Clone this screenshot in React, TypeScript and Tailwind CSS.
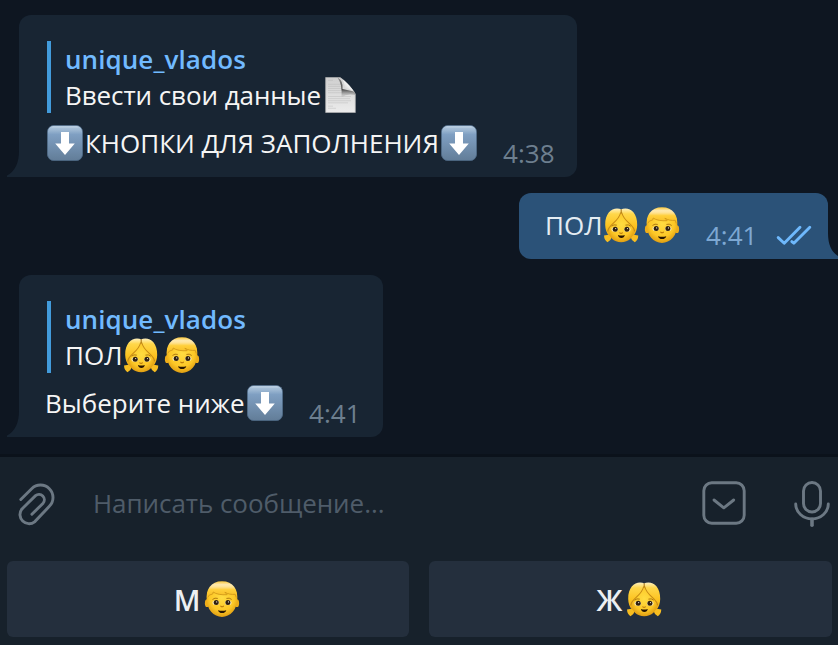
import type { ReactNode } from "react";

function Defs() {
  return (
    <svg width="0" height="0" className="absolute" aria-hidden="true">
      <defs>
        <linearGradient id="hair" x1="0" y1="0" x2="0" y2="1">
          <stop offset="0" stopColor="#fff0bd" />
          <stop offset="0.2" stopColor="#ffd749" />
          <stop offset="0.65" stopColor="#fcc21f" />
          <stop offset="1" stopColor="#eba914" />
        </linearGradient>
        <linearGradient id="boyHair" x1="0" y1="0" x2="0" y2="1">
          <stop offset="0" stopColor="#fbc93e" />
          <stop offset="0.18" stopColor="#ffeab0" />
          <stop offset="0.3" stopColor="#ffe291" />
          <stop offset="0.45" stopColor="#ffcf3a" />
          <stop offset="1" stopColor="#f3b418" />
        </linearGradient>
        <radialGradient id="skin" cx="0.5" cy="0.4" r="0.62">
          <stop offset="0" stopColor="#ffdc42" />
          <stop offset="0.65" stopColor="#fdc827" />
          <stop offset="1" stopColor="#dd9a10" />
        </radialGradient>
        <linearGradient id="tile" x1="0" y1="0" x2="0" y2="1">
          <stop offset="0" stopColor="#b4c9de" />
          <stop offset="0.12" stopColor="#a0bad4" />
          <stop offset="0.26" stopColor="#7f9fc2" />
          <stop offset="1" stopColor="#627d98" />
        </linearGradient>
        <linearGradient id="paper" x1="0" y1="0" x2="0" y2="1">
          <stop offset="0" stopColor="#cfcfcf" />
          <stop offset="1" stopColor="#ececec" />
        </linearGradient>
        <linearGradient id="curl" x1="0" y1="1" x2="1" y2="0">
          <stop offset="0" stopColor="#a8a8a8" />
          <stop offset="0.5" stopColor="#efefef" />
          <stop offset="1" stopColor="#ffffff" />
        </linearGradient>
        <linearGradient id="curlShade" x1="0" y1="0" x2="0" y2="1">
          <stop offset="0" stopColor="#8a8a8a" />
          <stop offset="0.6" stopColor="#4c4c4c" />
          <stop offset="1" stopColor="#bdbdbd" stopOpacity="0.2" />
        </linearGradient>
      </defs>
    </svg>
  );
}

function Emoji({ children }: { children: ReactNode }) {
  return (
    <span className="flex h-9 w-[41px] shrink-0 justify-center">
      <svg width="36" height="36" viewBox="0 0 36 36">{children}</svg>
    </span>
  );
}

function Features({ y = 0 }: { y?: number }) {
  return (
    <g transform={`translate(0 ${y})`}>
      <path d="M8.8 18.8Q10.8 17 13.4 17.9M22.8 17.9Q25.4 17 27.4 18.8" fill="none" stroke="#b07a10" strokeWidth="1" strokeLinecap="round" />
      <ellipse cx="11.8" cy="22.4" rx="3.3" ry="2.3" fill="#ffefb8" />
      <ellipse cx="24.2" cy="22.4" rx="3.3" ry="2.3" fill="#ffefb8" />
      <circle cx="12.2" cy="22.2" r="2.5" fill="#30200e" />
      <circle cx="23.9" cy="22.2" r="2.5" fill="#30200e" />
      <circle cx="12.7" cy="21.5" r="0.55" fill="#fff" />
      <circle cx="24.4" cy="21.5" r="0.55" fill="#fff" />
      <path d="M16.8 25.8Q18.1 26.8 19.4 25.8" fill="none" stroke="#bd7d0e" strokeWidth="1.1" strokeLinecap="round" />
    </g>
  );
}

function Girl() {
  return (
    <Emoji>
      <path d="M7 27.5L1 28.6Q1.2 33.4 4.5 35.2Q8 33.4 9 29.5ZM29.4 27.5L35.3 28.6Q35.1 33.4 31.8 35.2Q28.3 33.4 27.3 29.5Z" fill="#f7bd20" />
      <path d="M2.2 18C2 7 8 1.6 14 1.6Q16.8 1.6 18.2 2.5Q19.6 1.6 22.4 1.6C28.5 1.6 34.4 7 34.2 18Q34 25 30.5 28.5H6Q2.4 25 2.2 18Z" fill="url(#hair)" />
      <path d="M5.2 22.5C6.5 17 15.8 15 18.2 6C20.6 15 29.9 17 31.2 22.5C31.2 30 25.5 35.2 18.2 35.2C11 35.2 5.2 30 5.2 22.5Z" fill="url(#skin)" />
      <path d="M4.8 24.5C5 17.5 15.4 15.5 17.7 5.5M31.6 24.5C31.4 17.5 21 15.5 18.7 5.5" fill="none" stroke="#c88c14" strokeWidth="1.1" />
      <path d="M18.2 2.4V6.5" fill="none" stroke="#a86f0c" strokeWidth="1" />
      <Features y={0.1} />
      <path d="M14.9 28Q18.4 29 21.8 28Q21.2 31 18.4 31Q15.5 31 14.9 28Z" fill="#271500" />
    </Emoji>
  );
}

function Boy() {
  return (
    <Emoji>
      <ellipse cx="3.1" cy="22.2" rx="2.2" ry="3.9" fill="#eead19" />
      <ellipse cx="32.9" cy="22.2" rx="2.2" ry="3.9" fill="#eead19" />
      <path d="M2.9 16C3 8 8 4 18 4S33 8 33.1 16C33.9 29 26 35.9 18 35.9S2.1 29 2.9 16Z" fill="url(#skin)" />
      <path d="M2.8 19C1.6 8.5 6.8 0.3 18 0.3S34.4 8.5 33.2 19L31.6 13.6C28 14.2 24 13.2 21.4 11.6C21.8 12.8 22.8 13.4 23.7 13.6C17 14.3 11.5 12.8 9.2 11L8.8 13L5.1 14.3Q4.2 16.5 2.8 19Z" fill="url(#boyHair)" />
      <path d="M3.8 16.3L5.3 14.1L8.8 12.9L9.2 11C12 13.2 17.5 14.1 23.2 13.7L20.9 11.2C23.7 13 27.5 13.8 31.2 13.3L32.3 16.4" fill="none" stroke="#d39a18" strokeWidth="0.9" />
      <Features y={-0.6} />
      <path d="M14 29.2Q18.1 30.5 22.3 29.2Q21.5 32 18.1 32Q14.8 32 14 29.2Z" fill="#271500" />
    </Emoji>
  );
}

function DownArrow() {
  return (
    <Emoji>
      <rect x="0.4" y="0.4" width="35.2" height="35.2" rx="6.5" fill="url(#tile)" stroke="#4f6b88" strokeWidth="0.8" />
      <path d="M5 2H31" stroke="#d6e3ef" strokeWidth="1.2" strokeOpacity="0.5" strokeLinecap="round" />
      <path d="M14 7H22V18.5H27.8L18 30L8.2 18.5H14Z" fill="#fff" />
    </Emoji>
  );
}

function Page() {
  return (
    <Emoji>
      <path d="M2.7 0.4H17Q26 6.5 32.3 17V35.6H2.7Z" fill="url(#paper)" stroke="#b7b7b7" strokeWidth="0.7" />
      <path d="M5 3.3H10M5 7.3H17.5M5 9.4H18.5M5 11.5H19M5 13.6H19M5 15.7H20M5 19.5H28M5 21.6H27M5 23.7H28M5 25.8H25M5 29.2H10M5 31.3H13" stroke="#aeaeae" strokeWidth="0.6" strokeOpacity="0.6" />
      <path d="M14.5 0.5Q20.5 4 19.5 12L32 14.8V18Q24 16 18.5 20.5Q19.5 7 14.5 0.5Z" fill="url(#curlShade)" />
      <path d="M17 0.4Q22 4 21.5 11.6Q28 11 32.3 16.5Q26.5 7 17 0.4Z" fill="url(#curl)" />
    </Emoji>
  );
}

function Reply({ children }: { children: ReactNode }) {
  return (
    <div className="ml-[3px] h-[72px] border-l-4 border-[#429bdb] pl-[14px]">
      <div className="font-semibold tracking-[0.07px] text-[#71baff]">unique_vlados</div>
      <div className="flex">{children}</div>
    </div>
  );
}

function Incoming({ width, quote, time, children }: { width: string; quote: ReactNode; time: string; children: ReactNode }) {
  return (
    <div className={`relative ml-[19px] h-[162px] rounded-xl rounded-bl-none bg-[#182533] pt-[26px] pl-[25px] ${width}`}>
      <svg className="absolute bottom-0 -left-3" width="12" height="26" viewBox="0 0 12 26">
        <path d="M12 0V26H0V24.6Q12 18 12 0Z" fill="#182533" />
      </svg>
      <Reply>{quote}</Reply>
      <div className="mt-3 flex h-9">{children}</div>
      <time className="absolute right-[22.5px] bottom-[6px] text-[#6d7f8f]">{time}</time>
    </div>
  );
}

function Composer() {
  return (
    <div className="flex h-[94px] items-start pt-6 text-[#6c7883]">
      <svg className="mt-[2px] ml-[15.5px] shrink-0" width="40" height="44" viewBox="0 0 40 44" fill="none" stroke="currentColor" strokeWidth="2.9" strokeLinecap="round">
        <path d="M4.8 16.5L15.66 5.66A12.5 12.5 0 0 1 33.34 23.34L18.6 38.8A9.1 9.1 0 0 1 5.8 26.1L19.5 12.6A5.4 5.4 0 0 1 27.1 20.2L15.9 31.3" />
      </svg>
      <div className="mt-1 ml-[37.5px] flex-1 tracking-[-0.06px] text-[#4f5c69]">Написать сообщение...</div>
      <svg className="mr-12 shrink-0" width="44" height="44" viewBox="0 0 44 44" fill="none" stroke="currentColor" strokeWidth="2.9" strokeLinecap="round" strokeLinejoin="round">
        <rect x="1.8" y="1.8" width="40.4" height="40.4" rx="8" />
        <path d="M12 19L21.8 26.8L31.7 19" />
      </svg>
      <svg className="mr-2 shrink-0" width="36" height="46" viewBox="0 0 36 46" fill="none" stroke="currentColor" strokeWidth="2.9" strokeLinecap="round">
        <rect x="9.5" y="1.5" width="17" height="29.5" rx="8.5" />
        <path d="M1.7 22.9A16.3 15 0 0 0 34.3 22.9" />
        <path d="M18 38.3V44.2" strokeWidth="3.6" />
      </svg>
    </div>
  );
}

export default function App() {
  return (
    <div className="flex h-[645px] w-[838px] flex-col overflow-hidden bg-[#17212b] font-['Open_Sans','Noto_Sans',sans-serif] text-[26px] leading-9 whitespace-nowrap text-[#f5f5f5]">
      <Defs />
      <main className="flex h-[457px] flex-col gap-4 border-b-3 border-[#0b121b] bg-[#0e1621] pt-[15px]">
        <Incoming
          width="w-[558px]"
          time="4:38"
          quote={<><span className="-mr-[0.5px] tracking-[-0.08px]">Ввести свои данные</span><Page /></>}
        >
          <DownArrow /><span>КНОПКИ ДЛЯ ЗАПОЛНЕНИЯ</span><DownArrow />
        </Incoming>
        <div className="relative mr-[10px] flex h-[66px] w-[309px] self-end rounded-xl rounded-br-none bg-[#2b5278] pt-[14px] pl-[26px] text-[#e4ecf2]">
          <span className="-mr-[2px]">ПОЛ</span><Girl /><Boy />
          <time className="mt-[10px] ml-[23.5px] text-[#7da8d3]">4:41</time>
          <svg className="mt-[18px] ml-[18.5px]" width="36" height="22" viewBox="0 0 36 22" fill="none" stroke="#6eb8fc" strokeWidth="2.9" strokeLinecap="round" strokeLinejoin="round">
            <path d="M2.2 12.6L8.2 18.2L24 2.2M15.8 16.6L17.8 18.2L33.8 2.2" />
          </svg>
          <svg className="absolute -right-[10px] bottom-0" width="10" height="26" viewBox="0 0 10 26">
            <path d="M0 0V26H10V23Q0 17 0 0Z" fill="#2b5278" />
          </svg>
        </div>
        <Incoming
          width="w-[364px]"
          time="4:41"
          quote={<><span className="-mr-[2px]">ПОЛ</span><Girl /><Boy /></>}
        >
          <span className="ml-px">Выберите ниже</span><DownArrow />
        </Incoming>
      </main>
      <footer className="flex flex-1 flex-col">
        <Composer />
        <div className="mt-[10px] flex gap-5 pr-[6px] pl-[7px] text-[29px] font-semibold text-[#eceff2]">
          <button className="flex h-[76px] w-[402px] items-center justify-center rounded-md bg-[#242f3d]"><span className="mr-px pt-[2px]">М</span><Boy /></button>
          <button className="flex h-[76px] flex-1 items-center justify-center rounded-md bg-[#242f3d]"><span className="mr-px pt-[2px]">Ж</span><Girl /></button>
        </div>
      </footer>
    </div>
  );
}
